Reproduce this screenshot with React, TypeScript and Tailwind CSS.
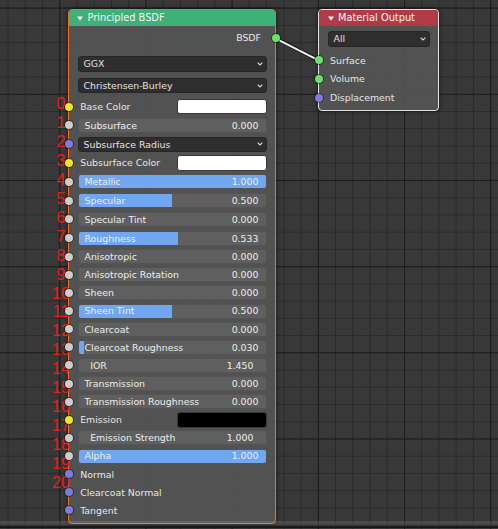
import React from 'react';

type SocketKind = 'color' | 'float' | 'vector' | 'shader';

type Row = {
    label: string;
    kind: 'color' | 'slider' | 'number' | 'dropdown' | 'socket';
    socket: SocketKind;
    value?: string;
    fill?: number;
    swatch?: 'white' | 'black';
};

const socketColor: Record<SocketKind, string> = {
    color: 'bg-[#e7e72c]',
    float: 'bg-[#cdcdcd]',
    vector: 'bg-[#7c7ce0]',
    shader: 'bg-[#6be06b]',
};

const rows: Row[] = [
    { label: 'Base Color', kind: 'color', socket: 'color', swatch: 'white' },
    { label: 'Subsurface', kind: 'slider', socket: 'float', value: '0.000', fill: 0 },
    { label: 'Subsurface Radius', kind: 'dropdown', socket: 'vector' },
    { label: 'Subsurface Color', kind: 'color', socket: 'color', swatch: 'white' },
    { label: 'Metallic', kind: 'slider', socket: 'float', value: '1.000', fill: 1 },
    { label: 'Specular', kind: 'slider', socket: 'float', value: '0.500', fill: 0.5 },
    { label: 'Specular Tint', kind: 'slider', socket: 'float', value: '0.000', fill: 0 },
    { label: 'Roughness', kind: 'slider', socket: 'float', value: '0.533', fill: 0.533 },
    { label: 'Anisotropic', kind: 'slider', socket: 'float', value: '0.000', fill: 0 },
    { label: 'Anisotropic Rotation', kind: 'slider', socket: 'float', value: '0.000', fill: 0 },
    { label: 'Sheen', kind: 'slider', socket: 'float', value: '0.000', fill: 0 },
    { label: 'Sheen Tint', kind: 'slider', socket: 'float', value: '0.500', fill: 0.5 },
    { label: 'Clearcoat', kind: 'slider', socket: 'float', value: '0.000', fill: 0 },
    { label: 'Clearcoat Roughness', kind: 'slider', socket: 'float', value: '0.030', fill: 0.03 },
    { label: 'IOR', kind: 'number', socket: 'float', value: '1.450' },
    { label: 'Transmission', kind: 'slider', socket: 'float', value: '0.000', fill: 0 },
    { label: 'Transmission Roughness', kind: 'slider', socket: 'float', value: '0.000', fill: 0 },
    { label: 'Emission', kind: 'color', socket: 'color', swatch: 'black' },
    { label: 'Emission Strength', kind: 'number', socket: 'float', value: '1.000' },
    { label: 'Alpha', kind: 'slider', socket: 'float', value: '1.000', fill: 1 },
    { label: 'Normal', kind: 'socket', socket: 'vector' },
    { label: 'Clearcoat Normal', kind: 'socket', socket: 'vector' },
    { label: 'Tangent', kind: 'socket', socket: 'vector' },
];

const Socket = ({ kind, side }: { kind: SocketKind; side: 'left' | 'right' }) => (
    <span
        className={`absolute top-1/2 z-20 block h-[8px] w-[8px] -translate-y-1/2 rounded-full shadow-[0_0_0_0.8px_rgba(0,0,0,0.55)] ${socketColor[kind]} ${
            side === 'left' ? '-left-[4.5px]' : '-right-[4.5px]'
        }`}
    />
);

const Chevron = () => (
    <svg width="6" height="4" viewBox="0 0 6 4" className="shrink-0">
        <polyline points="0.7,0.7 3,3 5.3,0.7" fill="none" stroke="#dcdcdc" strokeWidth="1.1" />
    </svg>
);

const Triangle = () => (
    <svg width="6" height="5" viewBox="0 0 6 5" className="shrink-0">
        <polygon points="0,0.5 6,0.5 3,4.8" fill="#f2f2f2" />
    </svg>
);

const Dropdown = ({ label, h = 'h-[15.6px]' }: { label: string; h?: string }) => (
    <div className={`flex ${h} items-center justify-between rounded-[3px] border border-[#262626] bg-[#2e2e2e] pl-[5px] pr-[3px] text-[#e2e2e2]`}>
        <span>{label}</span>
        <Chevron />
    </div>
);

const NodeRow = ({ row, index }: { row: Row; index: number }) => {
    const height = index < 8 ? 'h-[18.8px]' : 'h-[18.13px]';
    return (
        <div className={`relative flex ${height} items-center pl-[8.5px] pr-[8px]`}>
            <Socket kind={row.socket} side="left" />
            {row.kind === 'color' && (
                <div className="flex w-full items-center justify-between">
                    <span className="pl-[2.7px] text-[#e6e6e6]">{row.label}</span>
                    <span
                        className={`h-[15.5px] w-[90px] rounded-[3px] ${
                            row.swatch === 'white' ? 'bg-white' : 'bg-black'
                        } border border-[#3a3a3a]`}
                    />
                </div>
            )}
            {row.kind === 'socket' && <span className="pl-[2.7px] text-[#e6e6e6]">{row.label}</span>}
            {row.kind === 'dropdown' && (
                <div className="w-full">
                    <Dropdown label={row.label} h="h-[15px]" />
                </div>
            )}
            {row.kind === 'slider' && (
                <div className="relative h-[15px] w-full overflow-hidden rounded-[3px] border border-[#545454] bg-[#5f5f5f]">
                    <div className="absolute inset-y-0 left-0 bg-[#71a6f1]" style={{ width: `${(row.fill ?? 0) * 100}%` }} />
                    <div className="relative flex h-full items-center justify-between pl-[6px] pr-[7.5px] text-[#ededed]">
                        <span>{row.label}</span>
                        <span>{row.value}</span>
                    </div>
                </div>
            )}
            {row.kind === 'number' && (
                <div className="flex h-[15px] w-full items-center justify-between rounded-[3px] border border-[#545454] bg-[#5f5f5f] pl-[11.7px] pr-[12.5px] text-[#ededed]">
                    <span>{row.label}</span>
                    <span>{row.value}</span>
                </div>
            )}
        </div>
    );
};

const PrincipledNode = () => (
    <div className="absolute left-[68px] top-[9px] flex h-[515px] w-[208px] flex-col rounded-[4px] border-[1.5px] border-[#f26d23] bg-[#555555]/90 shadow-[0_0_5px_rgba(0,0,0,0.55)]">
        <div className="flex h-[16px] items-center gap-[4.5px] rounded-t-[3px] bg-[#3fb07a] pl-[8px] text-[9.8px] text-[#f4f4f4]">
            <Triangle />
            <span>Principled BSDF</span>
        </div>
        <div className="relative flex h-[24px] items-center justify-end pr-[14px] text-[#e6e6e6]">
            <span>BSDF</span>
            <Socket kind="shader" side="right" />
        </div>
        <div className="mt-[6.2px] flex flex-col gap-[6px] pl-[8.5px] pr-[8px]">
            <Dropdown label="GGX" />
            <Dropdown label="Christensen-Burley" />
        </div>
        <div className="mt-[3.9px] flex flex-col">
            {rows.map((row, i) => (
                <NodeRow key={row.label} row={row} index={i} />
            ))}
        </div>
    </div>
);

const OutputNode = () => (
    <div className="absolute left-[318px] top-[9px] flex h-[102px] w-[121px] flex-col rounded-[4px] border border-[#e4e4e4] bg-[#555555]/90 shadow-[0_0_5px_rgba(0,0,0,0.55)]">
        <div className="flex h-[16px] items-center gap-[4.5px] rounded-t-[3px] bg-[#b03a48] pl-[8.5px] text-[9.8px] text-[#f4f4f4]">
            <Triangle />
            <span>Material Output</span>
        </div>
        <div className="mt-[5px] px-[8.5px]">
            <Dropdown label="All" />
        </div>
        <div className="mt-[4.3px] flex flex-col text-[#e6e6e6]">
            {[
                { label: 'Surface', kind: 'shader' as SocketKind },
                { label: 'Volume', kind: 'shader' as SocketKind },
                { label: 'Displacement', kind: 'vector' as SocketKind },
            ].map((s) => (
                <div key={s.label} className="relative flex h-[18.7px] items-center pl-[11px]">
                    <Socket kind={s.kind} side="left" />
                    <span>{s.label}</span>
                </div>
            ))}
        </div>
    </div>
);

const App = () => {
    return (
        <div className="relative h-[529px] w-[498px] overflow-hidden bg-[#383838] font-['DejaVu_Sans',sans-serif] text-[9.4px] leading-none [background-image:linear-gradient(to_right,#1c1c1c_1.4px,transparent_1.4px),linear-gradient(to_bottom,#1c1c1c_1.4px,transparent_1.4px),linear-gradient(to_right,#2a2a2a_1px,transparent_1px),linear-gradient(to_bottom,#2a2a2a_1px,transparent_1px)] [background-position:59.3px_7.6px,59.3px_7.6px,7.6px_7.6px,7.6px_7.6px] [background-size:86.2px_86.2px,86.2px_86.2px,17.24px_17.24px,17.24px_17.24px]">
            {/* link between the nodes */}
            <svg className="absolute left-0 top-0" width="498" height="529">
                <line x1="275.3" y1="38.3" x2="318.7" y2="60.3" stroke="#1a1a1a" strokeWidth="4" strokeLinecap="round" />
                <line x1="275.3" y1="38.3" x2="318.7" y2="60.3" stroke="#f2f2f2" strokeWidth="2" strokeLinecap="round" />
            </svg>

            <PrincipledNode />
            <OutputNode />

            {/* red index labels */}
            {Array.from({ length: 21 }, (_, i) => (
                <span
                    key={i}
                    className="absolute z-10 w-[30px] -translate-x-1/2 text-center font-['Liberation_Sans',sans-serif] text-[16px] leading-[16px] text-[#e5201c]"
                    style={{ left: 61, top: 96 + i * 18.95 }}
                >
                    {i}
                </span>
            ))}

            <div className="absolute left-0 top-[520.5px] z-30 h-[5.5px] w-full bg-white/10" />
            <div className="absolute left-0 top-[526px] z-30 h-[1.5px] w-full bg-[#1a1a1a]" />
        </div>
    );
};

export default App;
